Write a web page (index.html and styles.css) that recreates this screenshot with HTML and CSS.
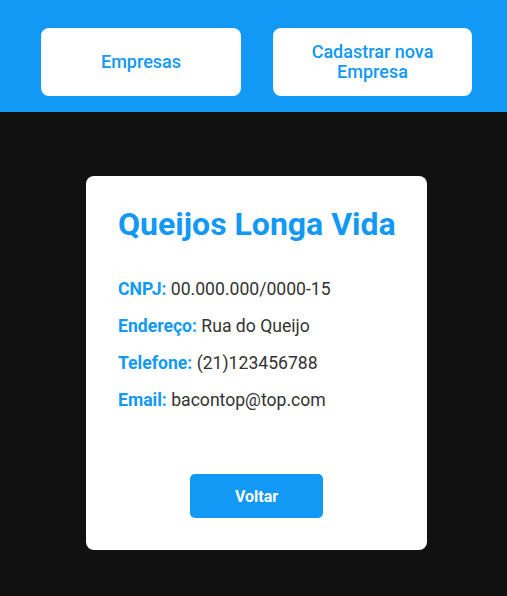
FILE: index.html
```html
<!DOCTYPE html>
<html lang="pt-BR">
<head>
<meta charset="utf-8">
<title>Empresa</title>
<link rel="stylesheet" href="styles.css">
</head>
<body>
<header class="topbar">
  <a class="nav-btn nav-btn-1" href="#">Empresas</a>
  <a class="nav-btn nav-btn-2" href="#">Cadastrar nova<br>Empresa</a>
</header>
<main class="content">
  <section class="card">
    <h1 class="card-title">Queijos Longa Vida</h1>
    <div class="info">
      <p class="row"><span class="label">CNPJ:</span> 00.000.000/0000-15</p>
      <p class="row"><span class="label">Endereço:</span> Rua do Queijo</p>
      <p class="row"><span class="label">Telefone:</span> (21)123456788</p>
      <p class="row"><span class="label">Email:</span> bacontop@top.com</p>
    </div>
    <div class="actions">
      <button class="back-btn" type="button">Voltar</button>
    </div>
  </section>
</main>
</body>
</html>
```

FILE: styles.css
```css
* { box-sizing: border-box; }
html, body {
  margin: 0;
  padding: 0;
  background: #111111;
  font-family: Roboto, "Liberation Sans", Arial, sans-serif;
}
.topbar {
  background: #1199f5;
  height: 112px;
  display: flex;
  align-items: flex-start;
  padding: 28px 35px 0 41px;
  gap: 32px;
}
.nav-btn {
  display: flex;
  align-items: center;
  justify-content: center;
  text-align: center;
  height: 68px;
  background: #ffffff;
  border-radius: 8px;
  color: #1199f5;
  font-size: 18px;
  font-weight: 500;
  line-height: 20px;
  text-decoration: none;
}
.nav-btn-1 { width: 200px; }
.nav-btn-2 { width: 199px; }
.content {
  padding: 64px 0 46px 86px;
}
.card {
  width: 341px;
  background: #ffffff;
  border-radius: 8px;
  padding: 30px 30px 32px 32px;
}
.card-title {
  margin: 0 0 36px;
  color: #1199f5;
  font-size: 32px;
  font-weight: 700;
  line-height: 37px;
  white-space: nowrap;
}
.info {
  display: flex;
  flex-direction: column;
  gap: 16px;
}
.row {
  margin: 0;
  font-size: 17.6px;
  line-height: 21px;
  color: #333333;
}
.label {
  color: #1199f5;
  font-weight: 700;
}
.actions {
  display: flex;
  justify-content: center;
  margin-top: 63px;
  padding-right: 2px;
}
.back-btn {
  width: 133px;
  height: 44px;
  border: none;
  border-radius: 5px;
  background: #1199f5;
  color: #ffffff;
  font-family: Roboto, "Liberation Sans", Arial, sans-serif;
  font-size: 16px;
  font-weight: 700;
  cursor: pointer;
}
```
